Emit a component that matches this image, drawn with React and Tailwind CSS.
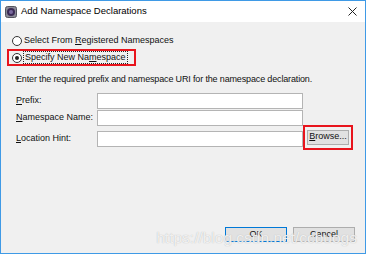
import React from 'react';

const font = { fontFamily: '"Liberation Sans", Arial, sans-serif' };

function Radio({ checked }) {
  return (
    <span className="relative flex h-[10px] w-[10px] shrink-0 items-center justify-center rounded-full border border-[#333] bg-white">
      {checked && <span className="h-[4px] w-[4px] rounded-full bg-[#222]" />}
    </span>
  );
}

function Field({ mn, rest, top }) {
  return (
    <div className={`flex items-center ${top}`}>
      <span className="w-[81px]">
        <span className="underline">{mn}</span>{rest}
      </span>
      <div className="h-[16px] w-[206px] border border-[#b4b4b4] bg-white" />
    </div>
  );
}

export default function App() {
  return (
    <div className="h-[256px] w-[367px] bg-white" style={font}>
      <div className="flex h-[254px] w-[366px] flex-col border border-[#3f9ae6]">
        {/* title bar */}
        <div className="flex h-[21px] items-center bg-white pl-[4px] pr-[8px]">
          <svg width="12" height="12" viewBox="0 0 12 12">
            <rect x="0.5" y="0.5" width="11" height="11" rx="2" fill="#8a8a96" stroke="#55555f" />
            <circle cx="6" cy="6" r="4" fill="#3b2b55" />
            <circle cx="6" cy="6" r="2" fill="#7a6aa0" />
          </svg>
          <span className="ml-[4px] text-[9.5px] text-black">Add Namespace Declarations</span>
          <svg className="ml-auto" width="9" height="9" viewBox="0 0 9 9">
            <path d="M0.5 0.5L8.5 8.5M8.5 0.5L0.5 8.5" stroke="#222" strokeWidth="1" />
          </svg>
        </div>

        {/* body */}
        <div className="relative flex flex-1 flex-col bg-[#f0f0f0] text-[9px] text-[#111]">
          <div className="ml-[11px] mt-[11px] flex h-[16px] items-center">
            <Radio />
            <span className="ml-[2px]">Select From <span className="underline">R</span>egistered Namespaces</span>
          </div>
          <div className="ml-[6px] flex h-[17px] w-[129px] items-center border-2 border-[#e8141c] pl-[3px]">
            <Radio checked />
            <span className="ml-[1px] border border-dotted border-[#222] px-[1px] leading-[11px]">
              Specify New Na<span className="underline">m</span>espace
            </span>
          </div>

          <div className="ml-[15px] mt-[7px] tracking-[-0.15px]">Enter the required prefix and namespace URI for the namespace declaration.</div>

          <div className="ml-[15px] mt-[6px] flex flex-col">
            <Field mn="P" rest="refix:" top="" />
            <Field mn="N" rest="amespace Name:" top="mt-[1px]" />
            <div className="mt-[3px] flex items-center">
              <span className="w-[81px]">
                <span className="underline">L</span>ocation Hint:
              </span>
              <div className="h-[16px] w-[206px] border border-[#b4b4b4] bg-white" />
              <div className="-mt-[4px] flex h-[25px] w-[50px] items-center justify-center border-2 border-[#e8141c]">
                <div className="flex h-[15px] w-[42px] items-center justify-center border border-[#adadad] bg-[#e1e1e1]">
                  <span className="underline">B</span>rowse...
                </div>
              </div>
            </div>
          </div>

          <div className="mt-auto mb-[11px] flex justify-end gap-[6px] pr-[10px]">
            <div className="flex h-[15px] w-[62px] items-center justify-center border border-[#0078d7] bg-[#e1e1e1]">OK</div>
            <div className="flex h-[15px] w-[62px] items-center justify-center border border-[#adadad] bg-[#e1e1e1]">Cancel</div>
          </div>

          <div
            className="pointer-events-none absolute bottom-[4px] right-[8px] text-[15.5px] text-white/80"
            style={{ textShadow: '0 0 1px #aaa' }}
          >
            https://blog.csdn.net/ccbuogs
          </div>
        </div>
      </div>
    </div>
  );
}
